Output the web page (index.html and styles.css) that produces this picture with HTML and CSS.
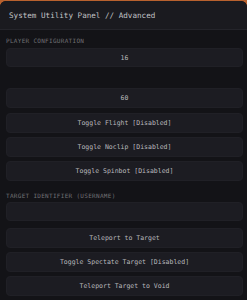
FILE: index.html
```html
<!DOCTYPE html>
<html>
<head>
<meta charset="utf-8">
<link rel="stylesheet" href="styles.css">
</head>
<body>
<div class="panel">
  <div class="header"><span class="title">System Utility Panel // Advanced</span></div>
  <div class="scroll">
    <div class="content">
      <div class="label first">PLAYER CONFIGURATION</div>
      <div class="field f16">16</div>
      <div class="spacer"></div>
      <div class="field">60</div>
      <div class="buttons">
        <div class="btn">Toggle Flight [Disabled]</div>
        <div class="btn">Toggle Noclip [Disabled]</div>
        <div class="btn">Toggle Spinbot [Disabled]</div>
      </div>
      <div class="label second">TARGET IDENTIFIER (USERNAME)</div>
      <div class="field input"></div>
      <div class="buttons target">
        <div class="btn">Teleport to Target</div>
        <div class="btn">Toggle Spectate Target [Disabled]</div>
        <div class="btn">Teleport Target to Void</div>
      </div>
    </div>
  </div>
</div>
</body>
</html>
```

FILE: styles.css
```css
html, body {
  margin: 0;
  padding: 0;
}
body {
  background: #b8612e;
  padding-top: 1px;
  font-family: "DejaVu Sans Mono", "Liberation Mono", monospace;
  overflow: hidden;
}
.panel {
  height: 299px;
  display: flex;
  flex-direction: column;
  background: #131317;
  border-radius: 6px 6px 0 0;
  overflow: hidden;
}
.header {
  height: 28px;
  flex: none;
  display: flex;
  align-items: center;
  padding: 0 9px;
  background: #1a1a1f;
  border-bottom: 1px solid #24242a;
}
.title {
  font-size: 7.6px;
  color: #c2c2c6;
}
.scroll {
  flex: 1;
  overflow-y: auto;
  margin-right: 4px;
}
.scroll::-webkit-scrollbar {
  width: 7px;
}
.scroll::-webkit-scrollbar-track {
  background: #0f0f12;
}
.scroll::-webkit-scrollbar-thumb {
  background: #2c2c32;
  border-left: 2px solid #0f0f12;
  border-right: 2px solid #0f0f12;
  border-top: 2px solid #0f0f12;
}
.content {
  padding: 0 0 0 6px;
  min-height: 640px;
}
.label {
  font-size: 6px;
  letter-spacing: 0.3px;
  line-height: 8px;
  color: #707074;
}
.label.first {
  padding-top: 7px;
  margin-bottom: 3px;
}
.label.second {
  margin-top: 11px;
  margin-bottom: 2px;
}
.field, .btn {
  height: 20px;
  box-sizing: border-box;
  display: flex;
  align-items: center;
  justify-content: center;
  background: #1c1c22;
  border: 1px solid #202026;
  border-radius: 4px;
  font-size: 6.5px;
  color: #b8b8bc;
}
.field.f16 {
  height: 19px;
}
.field.input {
  height: 19px;
}
.spacer {
  height: 21px;
}
.buttons {
  display: flex;
  flex-direction: column;
  gap: 4px;
  margin-top: 5px;
}
.buttons.target {
  margin-top: 7px;
}
```
